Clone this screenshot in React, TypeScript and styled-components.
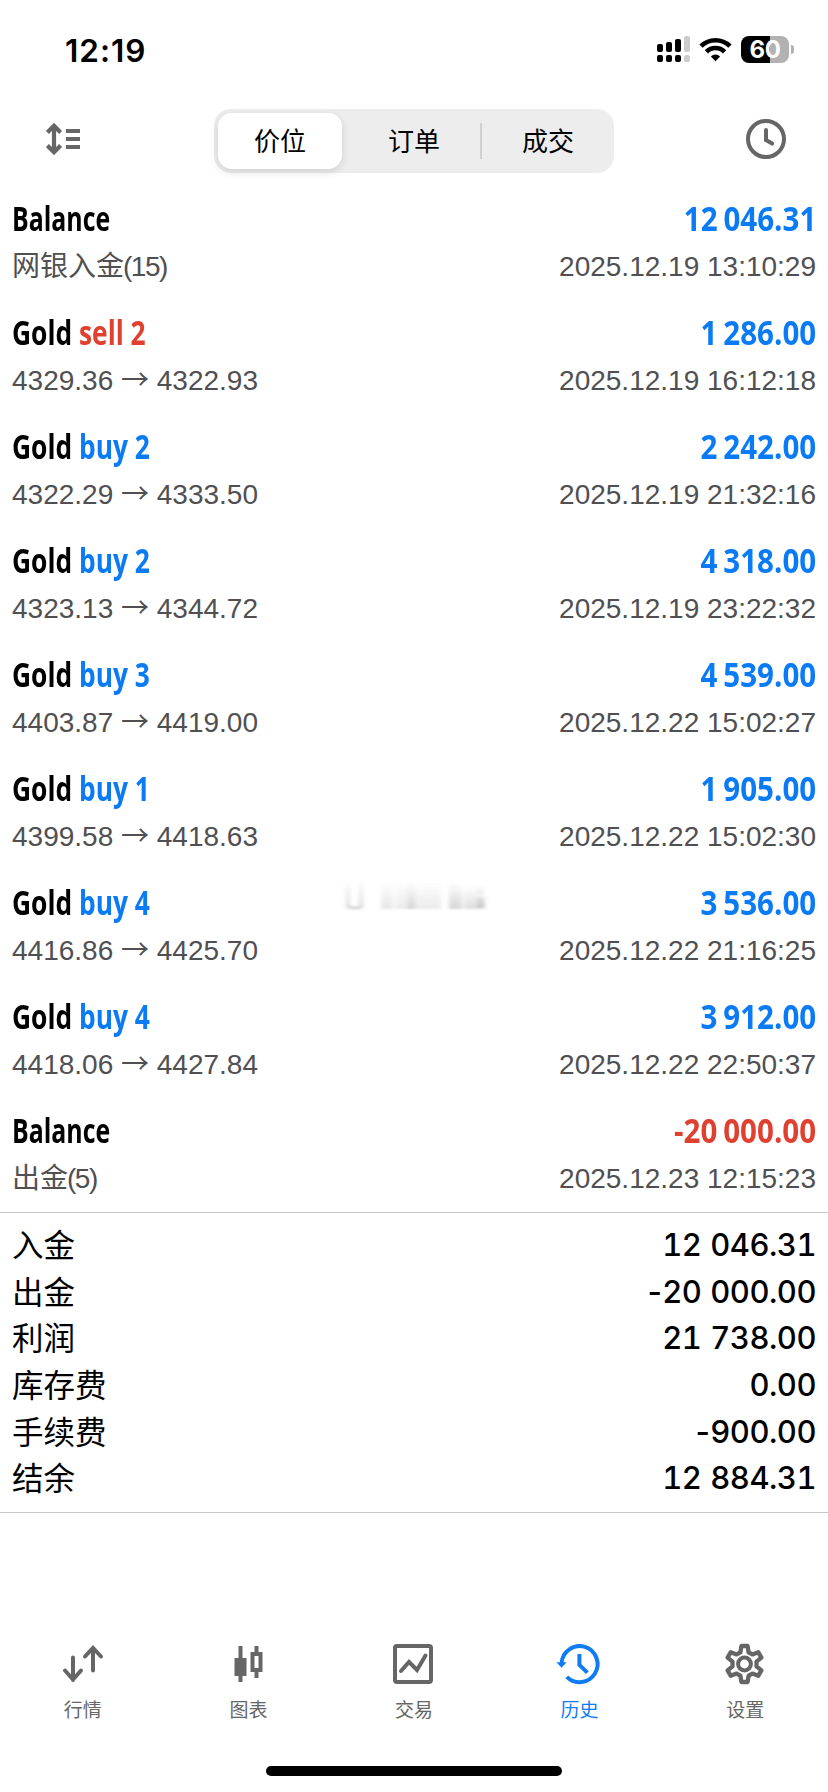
import React from 'react';
import styled, { createGlobalStyle } from 'styled-components';

const GlobalStyle = createGlobalStyle`
  * { box-sizing: border-box; }
  body { margin: 0; background: #fff; }
`;

const ui = `Inter, "Noto Sans CJK SC", sans-serif`;
const blue = '#0b7bf5';
const red = '#e0402f';
const grey = '#666';

const Screen = styled.main`
  width: 828px;
  height: 1792px;
  display: flex;
  flex-direction: column;
  background: #fff;
  color: #000;
  font-family: ${ui};
  overflow: hidden;
`;

const StatusBar = styled.header`
  height: 98px;
  padding: 0 34px 0 65px;
  display: flex;
  justify-content: space-between;
  align-items: center;
`;

const Time = styled.span`
  font-size: 31.5px;
  font-weight: 600;
  line-height: 40px;
  letter-spacing: 1px;
  padding-top: 3px;
`;

const StatusIcons = styled.div`
  display: flex;
  align-items: center;
  gap: 9px;
`;

const Battery = styled.div`
  display: flex;
  align-items: center;
  gap: 2px;
`;

const BatteryBody = styled.div`
  width: 48px;
  height: 27px;
  border-radius: 8px;
  background: linear-gradient(90deg, #000 0 29px, #b2b2b2 29px);
  color: #fff;
  font-size: 24px;
  font-weight: 700;
  line-height: 27px;
  text-align: center;
  letter-spacing: -0.3px;
`;

const BatteryTip = styled.div`
  width: 3px;
  height: 9px;
  border-radius: 0 4px 4px 0;
  background: #b2b2b2;
`;

const Toolbar = styled.nav`
  height: 88px;
  padding: 11px 42px 0 46px;
  display: flex;
  justify-content: space-between;
  align-items: flex-start;
`;

const ToolButton = styled.button<{ $width: number }>`
  height: 60px;
  width: ${p => p.$width}px;
  padding: 0;
  border: 0;
  background: none;
  display: flex;
  align-items: center;
`;

const Segments = styled.div`
  width: 400px;
  height: 64px;
  padding: 4px;
  display: flex;
  align-items: center;
  border-radius: 17px;
  background: #ededed;
`;

const Segment = styled.button<{ $active?: boolean }>`
  flex: none;
  width: ${p => (p.$active ? 124 : 134)}px;
  height: 56px;
  margin-right: ${p => (p.$active ? 5 : 0)}px;
  border: 0;
  padding: 0;
  border-radius: 14px;
  background: ${p => (p.$active ? '#fff' : 'none')};
  box-shadow: ${p => (p.$active ? '0 3px 10px rgba(0,0,0,.12)' : 'none')};
  font: 400 26px/58px ${ui};
  color: #000;
`;

const SegmentRule = styled.i`
  flex: none;
  width: 2px;
  height: 36px;
  margin: 0 -1px;
  background: #d0d0d0;
`;

const Deals = styled.section`
  display: flex;
  flex-direction: column;
  position: relative;
  border-bottom: 1px solid #c8c8c8;
`;

const Deal = styled.article`
  height: 114px;
  padding: 9px 12px 0;
`;

const DealLine = styled.div<{ $height: number }>`
  display: flex;
  justify-content: space-between;
  height: ${p => p.$height}px;
  line-height: ${p => p.$height}px;
  white-space: nowrap;
`;

const Title = styled.span<{ $stretch: number }>`
  font-family: "Open Sans", sans-serif;
  font-size: 33.5px;
  font-weight: 700;
  transform: scaleX(${p => p.$stretch});
  transform-origin: left;
`;

const Side = styled.span<{ $tone: string }>`
  color: ${p => p.$tone};
`;

const Amount = styled.span<{ $tone: string }>`
  font-family: "Open Sans", sans-serif;
  font-size: 33.5px;
  font-weight: 700;
  word-spacing: -2px;
  color: ${p => p.$tone};
  transform: scaleX(0.882);
  transform-origin: right;
`;

const Detail = styled.span`
  font-family: "Liberation Sans", "Noto Sans CJK SC", sans-serif;
  font-size: 28px;
  color: #505052;
`;

const Count = styled.span`
  margin-left: -1px;
  letter-spacing: -1.5px;
`;

const Arrow = styled.span`
  font-family: "Noto Sans CJK SC", sans-serif;
  line-height: 0;
`;

const Smudge = styled.svg`
  position: absolute;
  left: 341px;
  top: 694px;
`;

const Summary = styled.section`
  height: 300px;
  padding: 9px 12px 0;
  border-bottom: 1px solid #c8c8c8;
`;

const SummaryRow = styled.div`
  height: 46.7px;
  line-height: 46.7px;
  display: flex;
  justify-content: space-between;
`;

const Label = styled.span`
  font-family: "Noto Sans CJK SC", sans-serif;
  font-size: 31.5px;
  line-height: 43px;
`;

const Value = styled.span`
  font-size: 31px;
  font-weight: 500;
  font-variant-numeric: tabular-nums;
  letter-spacing: -0.5px;
  word-spacing: 1px;
`;

const Minus = styled.span`
  margin-right: -2px;
`;

const TabBar = styled.nav`
  margin-top: auto;
  height: 124px;
  display: flex;
  justify-content: space-between;
`;

const Tab = styled.button<{ $active?: boolean }>`
  width: 165.6px;
  padding: 0;
  border: 0;
  background: none;
  display: flex;
  flex-direction: column;
  align-items: center;
  color: ${p => (p.$active ? '#0f7bf5' : grey)};
  font: 400 19px/28px ${ui};
  gap: 11px;
`;

const Footer = styled.footer`
  height: 26px;
  display: flex;
  justify-content: center;
`;

const HomeBar = styled.div`
  width: 296px;
  height: 10px;
  border-radius: 5px;
  background: #000;
`;

type Row = { name: string; side?: string; tone?: string; amount: string; from?: string; to?: string; note?: string; count?: number; date: string };

const deals: Row[] = [
  { name: 'Balance', amount: '12 046.31', note: '网银入金', count: 15, date: '2025.12.19 13:10:29' },
  { name: 'Gold', side: 'sell 2', tone: red, amount: '1 286.00', from: '4329.36', to: '4322.93', date: '2025.12.19 16:12:18' },
  { name: 'Gold', side: 'buy 2', amount: '2 242.00', from: '4322.29', to: '4333.50', date: '2025.12.19 21:32:16' },
  { name: 'Gold', side: 'buy 2', amount: '4 318.00', from: '4323.13', to: '4344.72', date: '2025.12.19 23:22:32' },
  { name: 'Gold', side: 'buy 3', amount: '4 539.00', from: '4403.87', to: '4419.00', date: '2025.12.22 15:02:27' },
  { name: 'Gold', side: 'buy 1', amount: '1 905.00', from: '4399.58', to: '4418.63', date: '2025.12.22 15:02:30' },
  { name: 'Gold', side: 'buy 4', amount: '3 536.00', from: '4416.86', to: '4425.70', date: '2025.12.22 21:16:25' },
  { name: 'Gold', side: 'buy 4', amount: '3 912.00', from: '4418.06', to: '4427.84', date: '2025.12.22 22:50:37' },
  { name: 'Balance', amount: '-20 000.00', note: '出金', count: 5, date: '2025.12.23 12:15:23' },
];

const totals = [
  ['入金', '12 046.31'],
  ['出金', '-20 000.00'],
  ['利润', '21 738.00'],
  ['库存费', '0.00'],
  ['手续费', '-900.00'],
  ['结余', '12 884.31'],
];

const line = { fill: 'none', stroke: 'currentColor', strokeWidth: 4 };

const Signal = () => (
  <svg width="33" height="27" viewBox="0 0 33 27">
    <rect x="0" y="8" width="6" height="8" rx="2" />
    <rect x="9" y="6" width="6" height="10" rx="2" />
    <rect x="18" y="3" width="6" height="13" rx="2" />
    <rect x="27" y="0" width="6" height="16" rx="2" fill="#ccc" />
    <rect x="0" y="19" width="6" height="7" rx="2" />
    <rect x="9" y="19" width="6" height="7" rx="2" />
    <rect x="18" y="19" width="6" height="7" rx="2" />
    <rect x="27" y="19" width="6" height="7" rx="2" fill="#ccc" />
  </svg>
);

const Wifi = () => (
  <svg width="33" height="25" viewBox="0 0 33 25">
    <g fill="none" stroke="#000" strokeWidth="4.6">
      <path d="M2 9.2A20.6 20.6 0 0 1 31 9.2" />
      <path d="M7.4 14.8A12.8 12.8 0 0 1 25.6 14.8" />
    </g>
    <path d="M16.5 24.2L11.9 19.4A6.6 6.6 0 0 1 21.1 19.4Z" />
  </svg>
);

const Sort = () => (
  <svg width="34" height="32" viewBox="0 0 34 32" color={grey}>
    <path d="M8 3V29M1.4 9.4L8 2.8L14.6 9.4M1.4 22.6L8 29.2L14.6 22.6" {...line} strokeWidth={4.2} />
    <path d="M20 8H34M20 16H34M20 24H34" {...line} />
  </svg>
);

const Clock = () => (
  <svg width="40" height="40" viewBox="0 0 40 40" color={grey}>
    <circle cx="20" cy="20" r="18" {...line} />
    <path d="M20 11V21L26.2 24.6" {...line} strokeLinecap="round" />
  </svg>
);

const Quotes = () => (
  <svg width="44" height="44" viewBox="0 0 44 44">
    <path d="M12 15.5V38M4 28.5L12 37.5L20 28.5M32 28.5V6M24 14.5L32 6L40 14.5" {...line} strokeLinecap="round" />
  </svg>
);

const Candles = () => (
  <svg width="44" height="44" viewBox="0 0 44 44" fill="currentColor">
    <path d="M12.5 4h4v12h4v18h-4v6h-4v-6h-4V16h4z" />
    <path fillRule="evenodd" d="M28.5 4h4v6h4v20h-4v6h-4v-6h-4V10h4zM28.5 14v12h4V14z" />
  </svg>
);

const Trade = () => (
  <svg width="44" height="44" viewBox="0 0 44 44">
    <rect x="3" y="4" width="36" height="36" rx="2" {...line} />
    <path d="M9 29L17 20L25 28L33.5 13.5" {...line} strokeLinecap="round" />
  </svg>
);

const History = () => (
  <svg width="44" height="44" viewBox="0 0 44 44" overflow="visible">
    <path d="M3.6 21A18 18 0 1 1 8.8 34.8" {...line} />
    <path d="M-1.6 20.2H8.6L3.6 25.8Z" fill="currentColor" />
    <path d="M21.4 12V23L29.4 30.6" {...line} />
  </svg>
);

const Gear = () => (
  <svg width="44" height="44" viewBox="0 0 44 44">
    <circle cx="21.5" cy="22" r="6.4" {...line} />
    <path
      d="M18.4 4H24.6L25.6 10.3L29.4 12.4L35.2 10.2L38.4 15.7L33.5 19.7V24.3L38.4 28.3L35.2 33.8L29.4 31.6L25.6 33.7L24.6 40H18.4L17.4 33.7L13.6 31.6L7.8 33.8L4.6 28.3L9.5 24.3V19.7L4.6 15.7L7.8 10.2L13.6 12.4L17.4 10.3Z"
      {...line}
      strokeWidth={4.3}
      strokeLinejoin="round"
    />
  </svg>
);

const tabs = [
  { label: '行情', Icon: Quotes },
  { label: '图表', Icon: Candles },
  { label: '交易', Icon: Trade },
  { label: '历史', Icon: History, active: true },
  { label: '设置', Icon: Gear },
];

export default function App() {
  return (
    <>
      <GlobalStyle />
      <Screen>
        <StatusBar>
          <Time>12:19</Time>
          <StatusIcons>
            <Signal />
            <Wifi />
            <Battery>
              <BatteryBody>60</BatteryBody>
              <BatteryTip />
            </Battery>
          </StatusIcons>
        </StatusBar>
        <Toolbar>
          <ToolButton $width={36}><Sort /></ToolButton>
          <Segments>
            <Segment $active>价位</Segment>
            <Segment>订单</Segment>
            <SegmentRule />
            <Segment>成交</Segment>
          </Segments>
          <ToolButton $width={40}><Clock /></ToolButton>
        </Toolbar>
        <Deals>
          {deals.map(d => (
            <Deal key={d.date}>
              <DealLine $height={46}>
                <Title $stretch={d.side ? 0.787 : 0.742}>
                  {d.name}
                  {d.side && <Side $tone={d.tone ?? blue}> {d.side}</Side>}
                </Title>
                <Amount $tone={d.amount.startsWith('-') ? red : blue}>{d.amount}</Amount>
              </DealLine>
              <DealLine $height={52}>
                <Detail>
                  {d.note ? <>{d.note}<Count>({d.count})</Count></> : <>{d.from} <Arrow>→</Arrow> {d.to}</>}
                </Detail>
                <Detail>{d.date}</Detail>
              </DealLine>
            </Deal>
          ))}
          <Smudge width="150" height="34" viewBox="0 0 150 34">
            <defs>
              <linearGradient id="fade" x1="0" x2="0" y1="0" y2="1">
                <stop offset="0" stopColor="#777" stopOpacity="0" />
                <stop offset="1" stopColor="#777" stopOpacity=".3" />
              </linearGradient>
              <filter id="soft"><feGaussianBlur stdDeviation="2 0.8" /></filter>
            </defs>
            <g fill="url(#fade)" filter="url(#soft)">
              <path d="M5 0h4v26h9V0h4v28q-8 3-17 0z" />
              <rect x="40" y="2" width="12" height="27" opacity=".6" />
              <rect x="54" y="2" width="46" height="27" opacity=".5" />
              <rect x="66" y="2" width="8" height="27" opacity=".6" />
              <rect x="108" y="2" width="13" height="27" />
              <path d="M123 6h20v23h-20z" opacity=".8" />
              <path d="M136 5h7v8h-7zM136 18h8v10h-8z" opacity=".8" />
            </g>
          </Smudge>
        </Deals>
        <Summary>
          {totals.map(([label, value]) => (
            <SummaryRow key={label}>
              <Label>{label}</Label>
              <Value>
                {value.startsWith('-') ? <><Minus>-</Minus>{value.slice(1)}</> : value}
              </Value>
            </SummaryRow>
          ))}
        </Summary>
        <TabBar>
          {tabs.map(({ label, Icon, active }) => (
            <Tab key={label} $active={active}>
              <Icon />
              {label}
            </Tab>
          ))}
        </TabBar>
        <Footer><HomeBar /></Footer>
      </Screen>
    </>
  );
}
